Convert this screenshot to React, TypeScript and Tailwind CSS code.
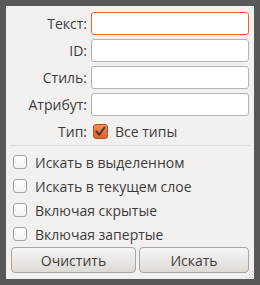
const fields = [
  { label: "Текст:", focused: true },
  { label: "ID:" },
  { label: "Стиль:" },
  { label: "Атрибут:" },
];

const options = [
  "Искать в выделенном",
  "Искать в текущем слое",
  "Включая скрытые",
  "Включая запертые",
];

const Box = () => (
  <span className="w-[14px] h-[14px] rounded-[3px] border border-[#a9a49f] bg-gradient-to-b from-white to-[#f4f3f2] shrink-0" />
);

const CheckedBox = () => (
  <span className="w-[15px] h-[15px] rounded-[3px] border border-[#c1501f] bg-gradient-to-b from-[#f28a5c] to-[#e0622c] shrink-0 flex items-center justify-center">
    <svg width="13" height="13" viewBox="0 0 13 13">
      <path d="M2.5 6.5 L5.2 9.8 L10.5 2.5" fill="none" stroke="#4a3a33" strokeWidth="2" strokeLinecap="round" strokeLinejoin="round" />
    </svg>
  </span>
);

export default function App() {
  return (
    <div
      className="w-[260px] h-[285px] bg-[#585858] p-[6px] text-[14px] text-[#3c3c3c]"
      style={{ fontFamily: '"Open Sans", "DejaVu Sans", sans-serif' }}
    >
      <div className="relative h-[273px] bg-[#f2f1f0] px-[5px] pt-[6px]">
        <div className="grid grid-cols-[76px_158px] gap-x-[4px] gap-y-[4px]">
          {fields.map((f) => (
            <div key={f.label} className="contents">
              <div className="h-[23px] flex items-center justify-end">{f.label}</div>
              <div
                className={
                  f.focused
                    ? "h-[23px] rounded-[3px] border border-[#e8642d] bg-white"
                    : "h-[23px] rounded-[3px] border border-[#b7b2ad] bg-white"
                }
              />
            </div>
          ))}
          <div className="h-[22px] flex items-center justify-end">Тип:</div>
          <div className="h-[22px] flex items-center gap-[7px] pl-[2px]">
            <CheckedBox />
            <span>Все типы</span>
          </div>
        </div>
        <div className="mt-[3px] -mx-[1px] h-px bg-[#dcd9d6]" />
        <div className="mt-[4px] flex flex-col">
          {options.map((o) => (
            <div key={o} className="h-[24px] flex items-center gap-[8px] pl-[2px]">
              <Box />
              <span>{o}</span>
            </div>
          ))}
        </div>
        <div className="mt-[1px] flex gap-[3px]">
          {["Очистить", "Искать"].map((b, i) => (
            <button
              key={b}
              className={
                (i === 0 ? "w-[125px]" : "flex-1") +
                " h-[26px] rounded-[4px] border border-[#aaa5a0] bg-gradient-to-b from-[#f6f5f4] to-[#dedad6] text-[#3c3c3c]"
              }
            >
              {b}
            </button>
          ))}
        </div>
        <svg className="absolute right-0 bottom-0" width="10" height="10" viewBox="0 0 10 10">
          {[
            [8, 2], [8, 5], [5, 5], [8, 8], [5, 8], [2, 8],
          ].map(([x, y]) => (
            <rect key={`${x}-${y}`} x={x} y={y} width="1" height="1" fill="#b9b5b1" />
          ))}
        </svg>
      </div>
    </div>
  );
}
